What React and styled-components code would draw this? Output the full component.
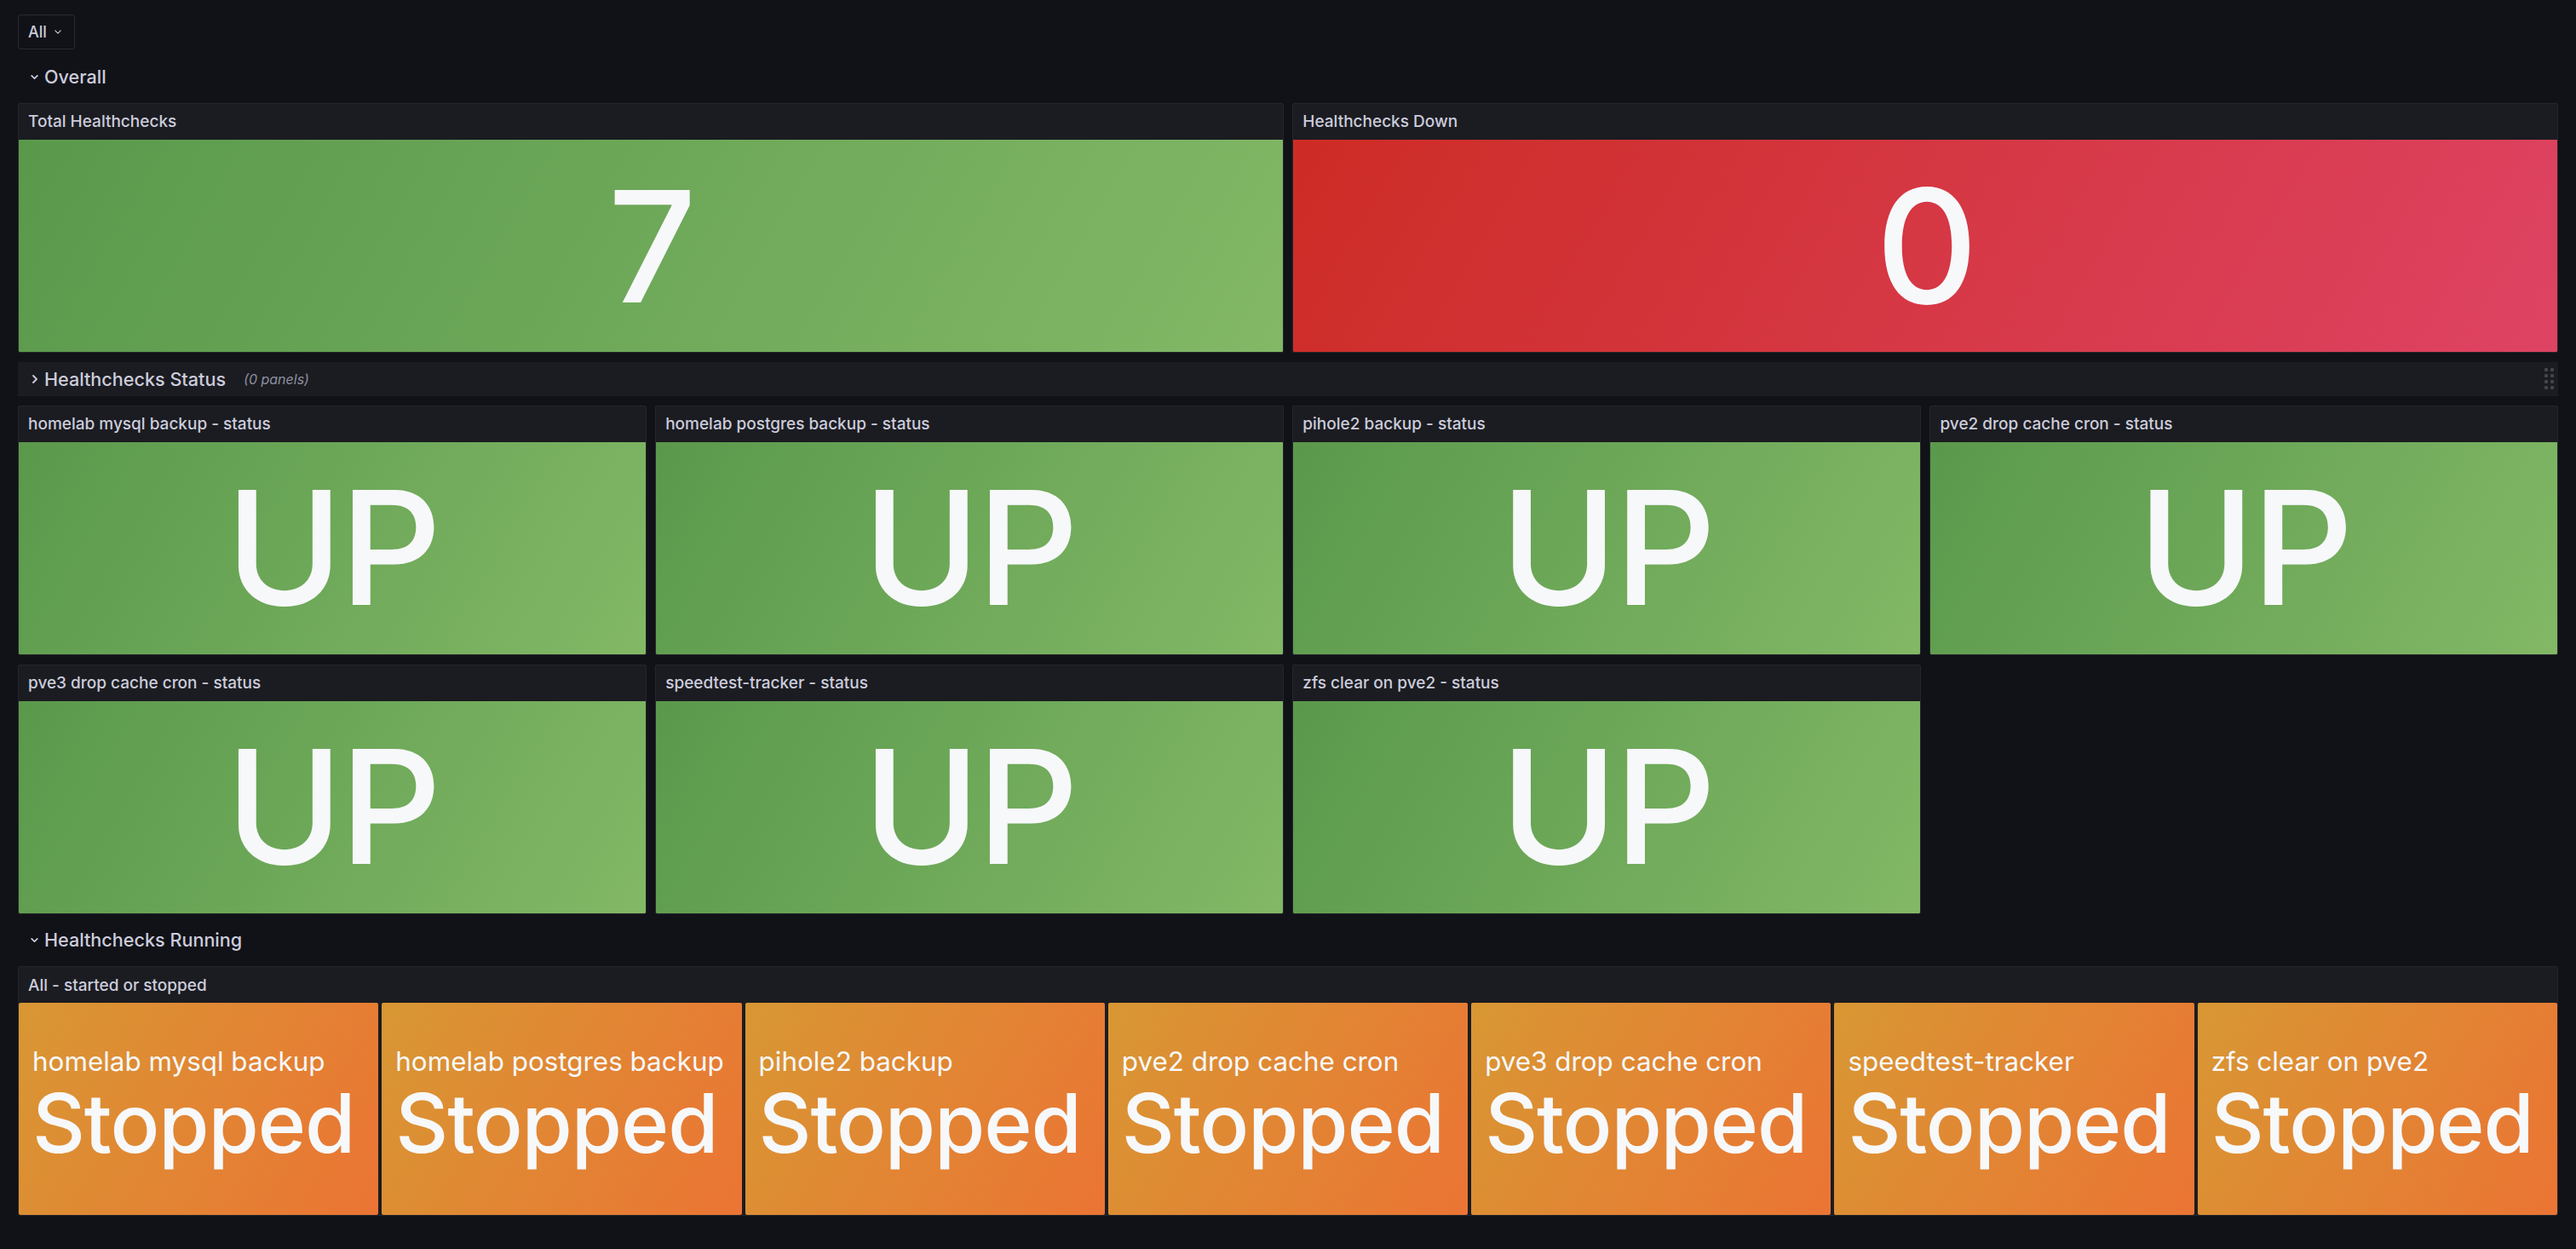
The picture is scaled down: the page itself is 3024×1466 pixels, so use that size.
import React from 'react';
import styled, { createGlobalStyle } from 'styled-components';

const GlobalStyle = createGlobalStyle`
  html, body { margin: 0; padding: 0; background: #111217; }
  body { font-family: Inter, "Noto Sans", sans-serif; color: #ccccdc; }
  * { box-sizing: border-box; }
`;

const GRADIENTS = {
  green: ['#5a994c', '#82b866'],
  red: ['#cd2c25', '#de4363'],
  orange: ['#d89733', '#eb7434'],
};

const Page = styled.div`
  min-height: 1466px;
  padding: 17px 21px 0;
`;

const Toolbar = styled.div`
  display: flex;
  height: 41px;
  margin-bottom: 12.33px;
`;

const VarButton = styled.button`
  display: flex;
  align-items: center;
  gap: 9px;
  height: 41px;
  width: 67px;
  padding: 0 0 0 11px;
  background: #111217;
  border: 1px solid #2a2b31;
  border-radius: 3px;
  color: #ccccdc;
  font: 500 18px Inter, sans-serif;
`;

const Grid = styled.div`
  display: grid;
  grid-template-columns: repeat(24, minmax(0, 1fr));
  grid-auto-rows: 40px;
  gap: 10.667px;
`;

const RowHeader = styled.div`
  grid-column: 1 / -1;
  display: flex;
  align-items: center;
  padding: 0 5px 0 15px;
  background: ${(p) => (p.$collapsed ? '#1b1c21' : 'transparent')};
  font: 500 21.6px Inter, sans-serif;
  color: #ccccdc;
`;

const Chevron = styled.span`
  display: flex;
  width: 9px;
  margin-right: 7px;
  justify-content: center;
`;

const RowCount = styled.span`
  margin-left: 21px;
  font: italic 400 16px Inter, sans-serif;
  color: #8e8fa0;
`;

const DragHandle = styled.div`
  margin-left: auto;
  display: grid;
  grid-template-columns: repeat(2, 4px);
  gap: 3px;
`;

const Dot = styled.span`
  width: 4px;
  height: 4px;
  border-radius: 1px;
  background: #44454b;
`;

const Panel = styled.section`
  grid-column: span ${(p) => p.$cols};
  grid-row: span ${(p) => p.$rows};
  display: flex;
  flex-direction: column;
  background: #1b1c21;
  border: 1px solid #25262b;
  border-radius: 2px;
  overflow: hidden;
  min-width: 0;
`;

const PanelHeader = styled.header`
  flex: none;
  height: 42px;
  display: flex;
  align-items: center;
  padding: 0 11px;
  font: 500 19px Inter, sans-serif;
  color: #ccccdc;
  white-space: nowrap;
`;

const StatValue = styled.div`
  flex: 1;
  display: flex;
  align-items: center;
  justify-content: center;
  background: linear-gradient(120deg, ${(p) => GRADIENTS[p.$tone][0]}, ${(p) => GRADIENTS[p.$tone][1]});
  font: 500 ${(p) => p.$size}px/1 Inter, sans-serif;
  letter-spacing: -0.02em;
  color: #f7f8fa;
  border-radius: 0 0 1px 1px;
`;

const Tiles = styled.div`
  flex: 1;
  display: flex;
  gap: 4px;
`;

const Tile = styled.div`
  flex: 1;
  min-width: 0;
  display: flex;
  flex-direction: column;
  justify-content: center;
  padding: 0 16px 5px;
  border-radius: 2px;
  overflow: hidden;
  background: linear-gradient(120deg, ${GRADIENTS.orange[0]}, ${GRADIENTS.orange[1]});
  color: #f7f8fa;
`;

const TileName = styled.div`
  font: 400 31.4px/40px Inter, sans-serif;
  white-space: nowrap;
`;

const TileValue = styled.div`
  font: 500 96px/1.1 Inter, sans-serif;
  letter-spacing: -0.012em;
  white-space: nowrap;
`;

const ChevronDown = ({ size = 9, w = 2 }) => (
  <svg width={size} height={Math.round(size * 0.6)} viewBox="0 0 10 6" fill="none">
    <path d="M1 1L5 5L9 1" stroke="#ccccdc" strokeWidth={w} strokeLinecap="round" strokeLinejoin="round" />
  </svg>
);

const ChevronRight = () => (
  <svg width="6" height="10" viewBox="0 0 6 10" fill="none">
    <path d="M1 1L5 5L1 9" stroke="#ccccdc" strokeWidth="1.8" strokeLinecap="round" strokeLinejoin="round" />
  </svg>
);

const statusPanels = [
  'homelab mysql backup',
  'homelab postgres backup',
  'pihole2 backup',
  'pve2 drop cache cron',
  'pve3 drop cache cron',
  'speedtest-tracker',
  'zfs clear on pve2',
];

export default function App() {
  return (
    <>
      <GlobalStyle />
      <Page>
        <Toolbar>
          <VarButton>
            All
            <ChevronDown size={8} w={1.4} />
          </VarButton>
        </Toolbar>
        <Grid>
          <RowHeader>
            <Chevron><ChevronDown /></Chevron>
            Overall
          </RowHeader>
          <Panel $cols={12} $rows={6}>
            <PanelHeader>Total Healthchecks</PanelHeader>
            <StatValue $tone="green" $size={182}>7</StatValue>
          </Panel>
          <Panel $cols={12} $rows={6}>
            <PanelHeader>Healthchecks Down</PanelHeader>
            <StatValue $tone="red" $size={186}>0</StatValue>
          </Panel>

          <RowHeader $collapsed>
            <Chevron><ChevronRight /></Chevron>
            Healthchecks Status
            <RowCount>(0 panels)</RowCount>
            <DragHandle>
              {Array.from({ length: 8 }).map((_, i) => (
                <Dot key={i} />
              ))}
            </DragHandle>
          </RowHeader>
          {statusPanels.map((name) => (
            <Panel key={name} $cols={6} $rows={6}>
              <PanelHeader>{name} - status</PanelHeader>
              <StatValue $tone="green" $size={186}>UP</StatValue>
            </Panel>
          ))}

          <RowHeader>
            <Chevron><ChevronDown /></Chevron>
            Healthchecks Running
          </RowHeader>
          <Panel $cols={24} $rows={6}>
            <PanelHeader>All - started or stopped</PanelHeader>
            <Tiles>
              {statusPanels.map((name) => (
                <Tile key={name}>
                  <TileName>{name}</TileName>
                  <TileValue>Stopped</TileValue>
                </Tile>
              ))}
            </Tiles>
          </Panel>
        </Grid>
      </Page>
    </>
  );
}
